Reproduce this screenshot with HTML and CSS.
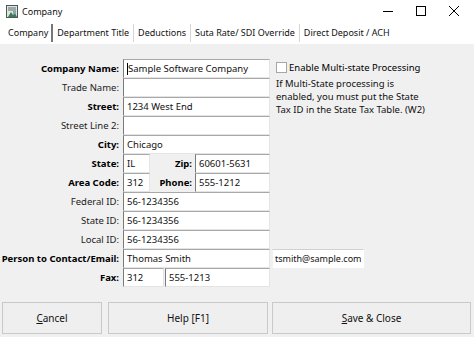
FILE: index.html
```html
<!DOCTYPE html>
<html>
<head>
<meta charset="utf-8">
<link rel="stylesheet" href="styles.css">
</head>
<body>
<div class="window">
  <div class="titlebar">
    <svg class="appicon" width="12" height="13" viewBox="0 0 12 13">
      <rect x="0.5" y="0.5" width="11" height="12" fill="#dfe6e0" stroke="#4a5a58"/>
      <path d="M2 3h8M2 5h8" stroke="#5d6e6a" stroke-width="1"/>
      <path d="M2 12l3-5 2 3 2-2 2 4z" fill="#3f7a55"/>
      <rect x="7" y="6" width="3" height="3" fill="#8aa3b8"/>
    </svg>
    <span class="title">Company</span>
    <div class="controls">
      <span class="ctl min"><svg width="10" height="10" viewBox="0 0 10 10"><path d="M0 5.5h10" stroke="#000"/></svg></span>
      <span class="ctl max"><svg width="10" height="10" viewBox="0 0 10 10"><rect x="0.5" y="0.5" width="9" height="9" fill="none" stroke="#000"/></svg></span>
      <span class="ctl close"><svg width="10" height="10" viewBox="0 0 10 10"><path d="M0 0L10 10M10 0L0 10" stroke="#000"/></svg></span>
    </div>
  </div>
  <div class="tabs">
    <span class="tab active">Company</span>
    <span class="tab">Department Title</span>
    <span class="tab">Deductions</span>
    <span class="tab">Suta Rate/ SDI Override</span>
    <span class="tab">Direct Deposit / ACH</span>
  </div>
  <div class="content">
    <div class="form">
      <label class="lbl b">Company Name:</label>
      <div class="fld"><span class="caret"></span>Sample Software Company</div>
      <div class="side">
        <div class="check"><span class="box"></span><span>Enable Multi-state Processing</span></div>
        <p class="note">If Multi-State processing is enabled, you must put the State Tax ID in the State Tax Table. (W2)</p>
      </div>

      <label class="lbl">Trade Name:</label>
      <div class="fld"></div>

      <label class="lbl b">Street:</label>
      <div class="fld">1234 West End</div>

      <label class="lbl">Street Line 2:</label>
      <div class="fld"></div>

      <label class="lbl b">City:</label>
      <div class="fld">Chicago</div>

      <label class="lbl b">State:</label>
      <div class="split">
        <div class="fld short">IL</div>
        <label class="lbl b inner">Zip:</label>
        <div class="fld mid">60601-5631</div>
      </div>

      <label class="lbl b">Area Code:</label>
      <div class="split">
        <div class="fld short">312</div>
        <label class="lbl b inner">Phone:</label>
        <div class="fld mid">555-1212</div>
      </div>

      <label class="lbl">Federal ID:</label>
      <div class="fld">56-1234356</div>

      <label class="lbl">State ID:</label>
      <div class="fld">56-1234356</div>

      <label class="lbl">Local ID:</label>
      <div class="fld">56-1234356</div>

      <label class="lbl b">Person to Contact/Email:</label>
      <div class="fld">Thomas Smith</div>
      <div class="fld email">tsmith@sample.com</div>

      <label class="lbl b">Fax:</label>
      <div class="split">
        <div class="fld fax1">312</div>
        <div class="fld fax2">555-1213</div>
      </div>
    </div>
    <div class="buttons">
      <button class="btn cancel"><u>C</u>ancel</button>
      <button class="btn help">Help [F1]</button>
      <button class="btn save"><u>S</u>ave &amp; Close</button>
    </div>
  </div>
</div>
</body>
</html>
```
FILE: styles.css
```css
* { box-sizing: border-box; }
html, body { margin: 0; padding: 0; }
body {
  width: 474px;
  height: 337px;
  overflow: hidden;
  background: #f0f0f0;
  font-family: "Noto Sans", "Open Sans", sans-serif;
  font-size: 9.5px;
  color: #000;
}
.window { width: 474px; height: 337px; display: flex; flex-direction: column; }
.titlebar {
  height: 22px;
  background: #fff;
  display: flex;
  align-items: center;
  padding-left: 6px;
}
.appicon { margin-top: 1px; }
.title { margin-left: 4px; font-size: 9px; color: #111; }
.controls { margin-left: auto; display: flex; height: 22px; }
.ctl { display: flex; align-items: center; justify-content: center; }
.ctl.min { width: 40px; }
.ctl.max { width: 26px; }
.ctl.close { width: 40px; }
.tabs {
  height: 22px;
  background: #fff;
  display: flex;
  align-items: center;
  padding-left: 6px;
  font-size: 9px;
}
.tab {
  padding: 0 4px;
  border-right: 1px solid #d6d6d6;
  line-height: 18px;
  color: #111;
}
.tab.active { border-right: 2px solid #777; padding-left: 2px; padding-right: 3px; }
.tab:last-child { border-right: none; }
.content { flex: 1; display: flex; flex-direction: column; padding-top: 15px; }
.form {
  display: grid;
  grid-template-columns: 123px 147px 1fr;
  grid-auto-rows: 19px;
}
.lbl {
  grid-column: 1;
  display: flex;
  align-items: center;
  justify-content: flex-end;
  padding-right: 4px;
  color: #222;
  white-space: nowrap;
}
.lbl.b { font-weight: bold; color: #000; }
.fld {
  grid-column: 2;
  background: #fff;
  border: 1px solid;
  border-color: #a8a8a8 #e4e4e4 #e4e4e4 #7a7a7a;
  display: flex;
  align-items: center;
  padding-left: 3px;
  white-space: nowrap;
  overflow: hidden;
  color: #111;
}
.caret { width: 1px; height: 12px; background: #000; }
.split { grid-column: 2; display: flex; }
.split .fld { height: 19px; }
.short { width: 27px; }
.inner { flex: 1; padding-right: 3px; }
.mid { width: 75px; }
.fax1 { width: 41px; }
.fax2 { flex: 1; margin-left: 1px; }
.email {
  grid-column: 3;
  width: 92px;
  margin-left: 2px;
  border-color: #d0d0d0 #fff #fff #f0f0f0;
  padding-left: 2px;
  font-size: 9px;
}
.side {
  grid-column: 3;
  grid-row: 1 / span 5;
  padding-left: 6px;
  padding-top: 2px;
}
.check { display: flex; align-items: center; gap: 1px; }
.box { width: 11px; height: 11px; border: 1px solid #a6a6a6; background: #fff; margin-right: 1px; }
.note { margin: 3px 0 0 0; line-height: 13px; width: 152px; color: #111; }
.buttons {
  display: flex;
  margin-top: 15px;
  padding-left: 2px;
  height: 32px;
}
.btn {
  font-family: inherit;
  font-size: 10px;
  color: #111;
  background: #efefef;
  border: 1px solid #c9c9c9;
  height: 32px;
  padding: 0;
}
.btn u { text-decoration: underline; }
.cancel { width: 100px; }
.help { width: 160px; margin-left: 6px; }
.save { width: 199px; margin-left: 4px; }
```
